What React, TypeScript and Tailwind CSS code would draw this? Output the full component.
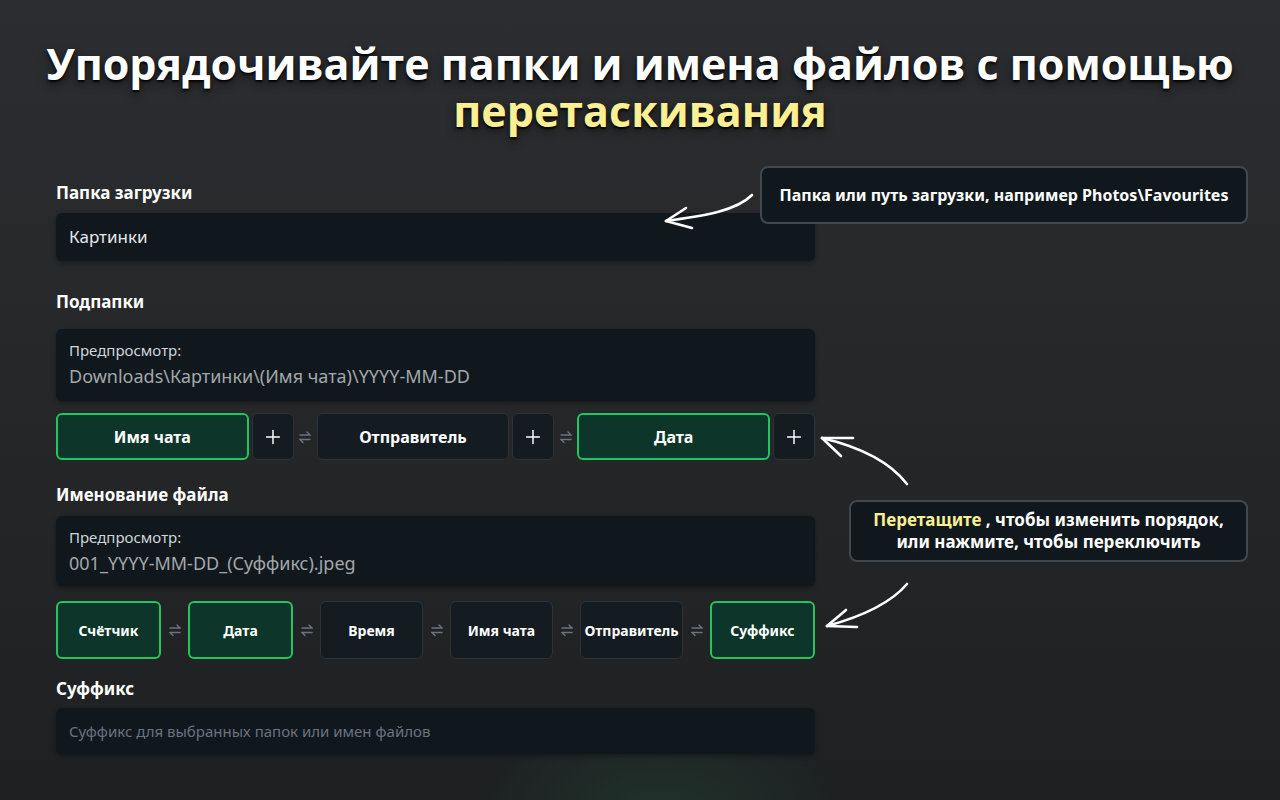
import { Plus } from 'lucide-react';

const FONT = { fontFamily: '"Noto Sans", "Open Sans", sans-serif' };

function SwapIcon() {
  return (
    <svg width="12" height="14" viewBox="0 0 12 14" fill="none" stroke="#6b7280" strokeWidth="1.4" strokeLinecap="round">
      <path d="M1 5h10L8 2" />
      <path d="M11 9.5H1l3 3" />
    </svg>
  );
}

function Label({ children, className = '' }: { children: React.ReactNode; className?: string }) {
  return <div className={`text-[17px] font-bold leading-6 text-white ${className}`}>{children}</div>;
}

function Preview({ path, className = '' }: { path: string; className?: string }) {
  return (
    <div className={`rounded-md bg-[#10181d] px-[13px] pt-[11px] pb-[11px] shadow-[0_2px_4px_rgba(0,0,0,0.35)] ${className}`}>
      <div className="text-[15px] leading-5 text-[#d1d5db]">Предпросмотр:</div>
      <div className="mt-[3px] text-[18px] leading-[26px] text-[#a3a7ab]">{path}</div>
    </div>
  );
}

function Chip({ label, active, small }: { label: string; active?: boolean; small?: boolean }) {
  return (
    <div
      className={`flex flex-1 items-center justify-center rounded-md font-bold text-white ${
        small ? 'text-[14px]' : 'text-[16px]'
      } ${active ? 'border-2 border-[#22c55e] bg-[#0d3529]' : 'border border-[#2b3238] bg-[#141b21]'}`}
    >
      {label}
    </div>
  );
}

function PlusButton() {
  return (
    <div className="flex w-[42px] items-center justify-center rounded-md border border-[#2b3238] bg-[#141b21] text-white">
      <Plus size={22} strokeWidth={1.6} />
    </div>
  );
}

function Sep({ w }: { w: string }) {
  return <div className={`flex shrink-0 items-center justify-center ${w}`}><SwapIcon /></div>;
}

export default function App() {
  const folders = [
    { label: 'Имя чата', active: true },
    { label: 'Отправитель', active: false },
    { label: 'Дата', active: true },
  ];
  const naming = [
    { label: 'Счётчик', active: true },
    { label: 'Дата', active: true },
    { label: 'Время', active: false },
    { label: 'Имя чата', active: false },
    { label: 'Отправитель', active: false },
    { label: 'Суффикс', active: true },
  ];

  return (
    <div
      className="relative h-[800px] w-[1280px] overflow-hidden bg-[linear-gradient(180deg,#2b2d30_0%,#242628_55%,#1e2022_100%)]"
      style={FONT}
    >
      <div className="pointer-events-none absolute bottom-[-160px] left-[470px] h-[260px] w-[380px] rounded-full bg-[radial-gradient(closest-side,rgba(34,90,60,0.35),transparent)]" />

      <div className="relative flex h-[181px] flex-col items-center pt-[40px]">
        <h1
          className="text-center text-[43px] font-bold leading-[47px] text-white [text-shadow:0_2px_2px_rgba(0,0,0,0.85),0_4px_8px_rgba(0,0,0,0.5)]"
          style={{ fontFamily: '"Open Sans", "Noto Sans", sans-serif' }}
        >
          Упорядочивайте папки и имена файлов с помощью
          <br />
          <span className="text-[#fbef94]">перетаскивания</span>
        </h1>
      </div>

      <div className="relative ml-[56px] flex w-[759px] flex-col">
        <Label>Папка загрузки</Label>
        <div className="mt-[8px] flex h-[48px] items-center rounded-md bg-[#10181d] px-[13px] text-[17px] text-[#e5e7eb] shadow-[0_2px_4px_rgba(0,0,0,0.35)]">
          Картинки
        </div>

        <Label className="mt-[29px]">Подпапки</Label>
        <Preview className="mt-[15px] h-[72px]" path="Downloads\Картинки\(Имя чата)\YYYY-MM-DD" />

        <div className="mt-[12px] flex h-[47px]">
          {folders.map((f, i) => (
            <div key={f.label} className="contents">
              {i > 0 && <Sep w="w-[23px]" />}
              <div className="flex flex-1 gap-[3px]">
                <Chip label={f.label} active={f.active} />
                <PlusButton />
              </div>
            </div>
          ))}
        </div>

        <Label className="mt-[23px]">Именование файла</Label>
        <Preview className="mt-[9px] h-[70px]" path="001_YYYY-MM-DD_(Суффикс).jpeg" />

        <div className="mt-[15px] flex h-[58px]">
          {naming.map((n, i) => (
            <div key={n.label + i} className="contents">
              {i > 0 && <Sep w="w-[27px]" />}
              <Chip label={n.label} active={n.active} small />
            </div>
          ))}
        </div>

        <Label className="mt-[18px]">Суффикс</Label>
        <div className="mt-[7px] flex h-[46px] items-center rounded-md bg-[#10181d] px-[13px] text-[15px] text-[#6b7280] shadow-[0_2px_4px_rgba(0,0,0,0.35)]">
          Суффикс для выбранных папок или имен файлов
        </div>
      </div>

      {/* callouts */}
      <div className="absolute left-[760px] top-[166px] flex h-[58px] w-[488px] items-center justify-center rounded-lg border-2 border-[#3f484f] bg-[#11181d] text-[16px] font-bold text-white">
        Папка или путь загрузки, например Photos\Favourites
      </div>
      <div className="absolute left-[849px] top-[500px] flex h-[62px] w-[399px] flex-col items-center justify-center rounded-lg border-2 border-[#3f484f] bg-[#11181d] text-center text-[17px] font-bold leading-[22px] text-white">
        <div>
          <span className="text-[#fbef94]">Перетащите</span> , чтобы изменить порядок,
        </div>
        <div>или нажмите, чтобы переключить</div>
      </div>

      <svg className="pointer-events-none absolute left-0 top-0" width="1280" height="800" fill="none" stroke="white" strokeWidth="2.6" strokeLinecap="round" strokeLinejoin="round">
        <path d="M752 195 C 735 212, 700 216, 666 221" />
        <path d="M666 221 L 686 208" />
        <path d="M666 221 L 692 228" />

        <path d="M907 484 C 890 462, 860 447, 822 438" />
        <path d="M822 438 L 853 438" />
        <path d="M822 438 L 841 456" />

        <path d="M907 584 C 890 604, 860 617, 827 626" />
        <path d="M827 626 L 846 610" />
        <path d="M827 626 L 857 627" />
      </svg>
    </div>
  );
}
